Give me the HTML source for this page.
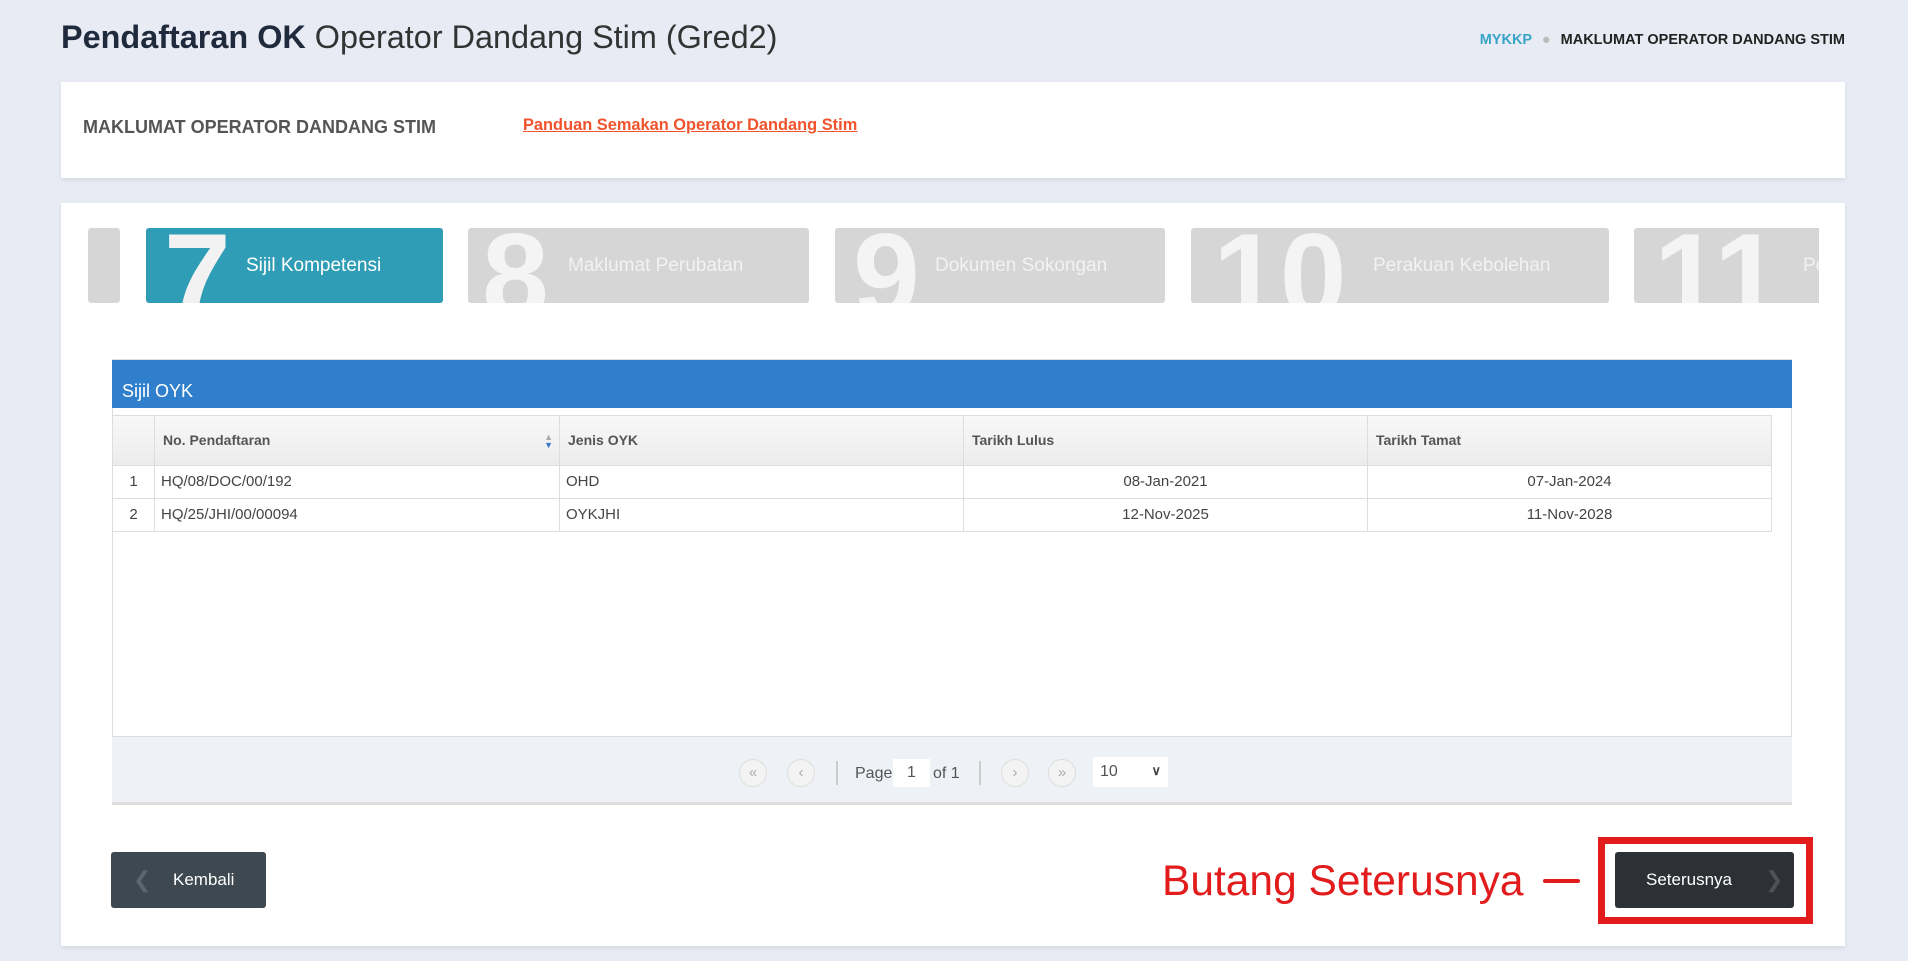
<!DOCTYPE html>
<html><head><meta charset="utf-8"><style>
*{box-sizing:border-box;margin:0;padding:0}
body{width:1908px;height:961px;background:#e8ebf4;font-family:"Liberation Sans",sans-serif;position:relative;overflow:hidden;color:#333}
.abs{position:absolute}
.panel{position:absolute;background:#fff;box-shadow:0 2px 4px rgba(0,0,0,.08)}
.step{position:absolute;top:228px;height:75px;background:#d6d6d6;border-radius:3px;overflow:hidden;color:#f2f2f2}
.step .n{position:absolute;top:-12px;font-size:120px;line-height:1;font-weight:bold;color:#f4f4f4}
.step .t{position:absolute;top:0;line-height:75px;font-size:19px;white-space:nowrap}
.th{position:absolute;top:415px;height:51px;line-height:51px;font-size:14px;font-weight:bold;color:#555;padding-left:8px;border-right:1px solid #ddd}
.td{position:absolute;height:33px;line-height:32px;font-size:15px;color:#444;border-right:1px solid #ddd;border-bottom:1px solid #ddd;padding-left:6px;white-space:nowrap}
.c{text-align:center;padding-left:0}
.circ{position:absolute;top:759px;width:28px;height:28px;border-radius:50%;border:1px solid #ddd;background:#f3f3f3;color:#aaa;text-align:center;line-height:25px;font-size:15px}
</style></head><body>
<div class="abs" style="left:61px;top:15px;font-size:32.4px;line-height:44px;color:#1f2a3c;white-space:nowrap"><b>Pendaftaran OK</b> <span style="color:#333;font-weight:300">Operator Dandang Stim (Gred2)</span></div>
<div class="abs" style="right:63px;top:32px;font-size:14.5px;font-weight:bold;white-space:nowrap"><span style="color:#37a3c6">MYKKP</span> <span style="color:#bbb;margin:0 6px">●</span> <span style="color:#222">MAKLUMAT OPERATOR DANDANG STIM</span></div>

<div class="panel" style="left:61px;top:82px;width:1784px;height:96px"></div>
<div class="abs" style="left:83px;top:117px;font-size:18px;font-weight:bold;color:#555">MAKLUMAT OPERATOR DANDANG STIM</div>
<div class="abs" style="left:523px;top:116px;font-size:16.4px;font-weight:bold;color:#f0532d;text-decoration:underline">Panduan Semakan Operator Dandang Stim</div>

<div class="panel" style="left:61px;top:203px;width:1784px;height:743px"></div>
<div class="abs" style="left:88px;top:228px;width:1731px;height:75px;overflow:hidden">
 <div class="step" style="left:0;top:0;width:32px"></div>
 <div class="step" style="left:58px;top:0;width:297px;background:#2f9db5"><div class="n" style="left:18px;color:#f2f2f2">7</div><div class="t" style="left:100px;color:#fff">Sijil Kompetensi</div></div>
 <div class="step" style="left:380px;top:0;width:341px"><div class="n" style="left:14px">8</div><div class="t" style="left:100px">Maklumat Perubatan</div></div>
 <div class="step" style="left:747px;top:0;width:330px"><div class="n" style="left:18px">9</div><div class="t" style="left:100px">Dokumen Sokongan</div></div>
 <div class="step" style="left:1103px;top:0;width:418px"><div class="n" style="left:22px">10</div><div class="t" style="left:182px">Perakuan Kebolehan</div></div>
 <div class="step" style="left:1546px;top:0;width:200px"><div class="n" style="left:20px">11</div><div class="t" style="left:169px">Pengesahan</div></div>
</div>

<div class="abs" style="left:112px;top:359px;width:1680px;height:446px;border:1px solid #ddd;background:#fff"></div>
<div class="abs" style="left:112px;top:360px;width:1680px;height:48px;background:#307fcc;color:#fff;font-size:18px;line-height:62px;padding-left:10px">Sijil OYK</div>
<div class="abs" style="left:112px;top:415px;width:1660px;height:51px;background:linear-gradient(#f8f8f8,#ececec);border-top:1px solid #ddd;border-bottom:1px solid #ddd"></div>
<div class="th" style="left:112px;width:43px;border-left:1px solid #ddd"></div>
<div class="th" style="left:155px;width:405px">No. Pendaftaran<span style="position:absolute;right:6px;top:0;font-size:9px;line-height:8px;padding-top:18px;color:#aaa">▲<br><span style="color:#3a78c8">▼</span></span></div>
<div class="th" style="left:560px;width:404px">Jenis OYK</div>
<div class="th" style="left:964px;width:404px">Tarikh Lulus</div>
<div class="th" style="left:1368px;width:404px">Tarikh Tamat</div>

<div class="td c" style="left:112px;top:466px;width:43px;border-left:1px solid #ddd">1</div>
<div class="td" style="left:155px;top:466px;width:405px">HQ/08/DOC/00/192</div>
<div class="td" style="left:560px;top:466px;width:404px">OHD</div>
<div class="td c" style="left:964px;top:466px;width:404px">08-Jan-2021</div>
<div class="td c" style="left:1368px;top:466px;width:404px">07-Jan-2024</div>
<div class="td c" style="left:112px;top:499px;width:43px;border-left:1px solid #ddd">2</div>
<div class="td" style="left:155px;top:499px;width:405px">HQ/25/JHI/00/00094</div>
<div class="td" style="left:560px;top:499px;width:404px">OYKJHI</div>
<div class="td c" style="left:964px;top:499px;width:404px">12-Nov-2025</div>
<div class="td c" style="left:1368px;top:499px;width:404px">11-Nov-2028</div>

<div class="abs" style="left:112px;top:736px;width:1680px;height:68px;background:#eef1f6;border-top:1px solid #ddd;border-bottom:2px solid #ddd"></div>
<div class="circ" style="left:739px">«</div>
<div class="circ" style="left:787px">‹</div>
<div class="abs" style="left:836px;top:761px;width:2px;height:24px;background:#ccc"></div>
<div class="abs" style="left:855px;top:765px;font-size:16px;color:#555">Page</div>
<div class="abs" style="left:893px;top:759px;width:37px;height:28px;background:#fff;text-align:center;font-size:16px;line-height:28px;color:#555">1</div>
<div class="abs" style="left:933px;top:765px;font-size:16px;color:#555">of 1</div>
<div class="abs" style="left:979px;top:761px;width:2px;height:24px;background:#ccc"></div>
<div class="circ" style="left:1001px">›</div>
<div class="circ" style="left:1048px">»</div>
<div class="abs" style="left:1093px;top:757px;width:75px;height:30px;background:#fff;font-size:16px;line-height:30px;padding-left:7px;color:#555">10<span style="position:absolute;right:7px;top:-1px;font-weight:bold;color:#444;font-size:13px">&#x2228;</span></div>

<div class="abs" style="left:111px;top:852px;width:155px;height:56px;background:#3d4850;border-radius:3px;color:#fff;font-size:17px;line-height:56px"><span style="position:absolute;left:22px;color:#5b6670;font-size:22px">❮</span><span style="position:absolute;left:62px">Kembali</span></div>

<div class="abs" style="left:1162px;top:858px;font-size:42.5px;line-height:48px;color:#e21c1c;white-space:nowrap">Butang Seterusnya</div>
<div class="abs" style="left:1543px;top:879px;width:37px;height:4px;background:#e21c1c;border-radius:2px"></div>
<div class="abs" style="left:1598px;top:837px;width:215px;height:87px;border:7px solid #e21c1c"></div>
<div class="abs" style="left:1615px;top:852px;width:179px;height:56px;background:#2d3035;border-radius:3px;color:#fff;font-size:17px;line-height:56px"><span style="position:absolute;left:31px">Seterusnya</span><span style="position:absolute;left:150px;color:#4d5258;font-size:22px">❯</span></div>
</body></html>
